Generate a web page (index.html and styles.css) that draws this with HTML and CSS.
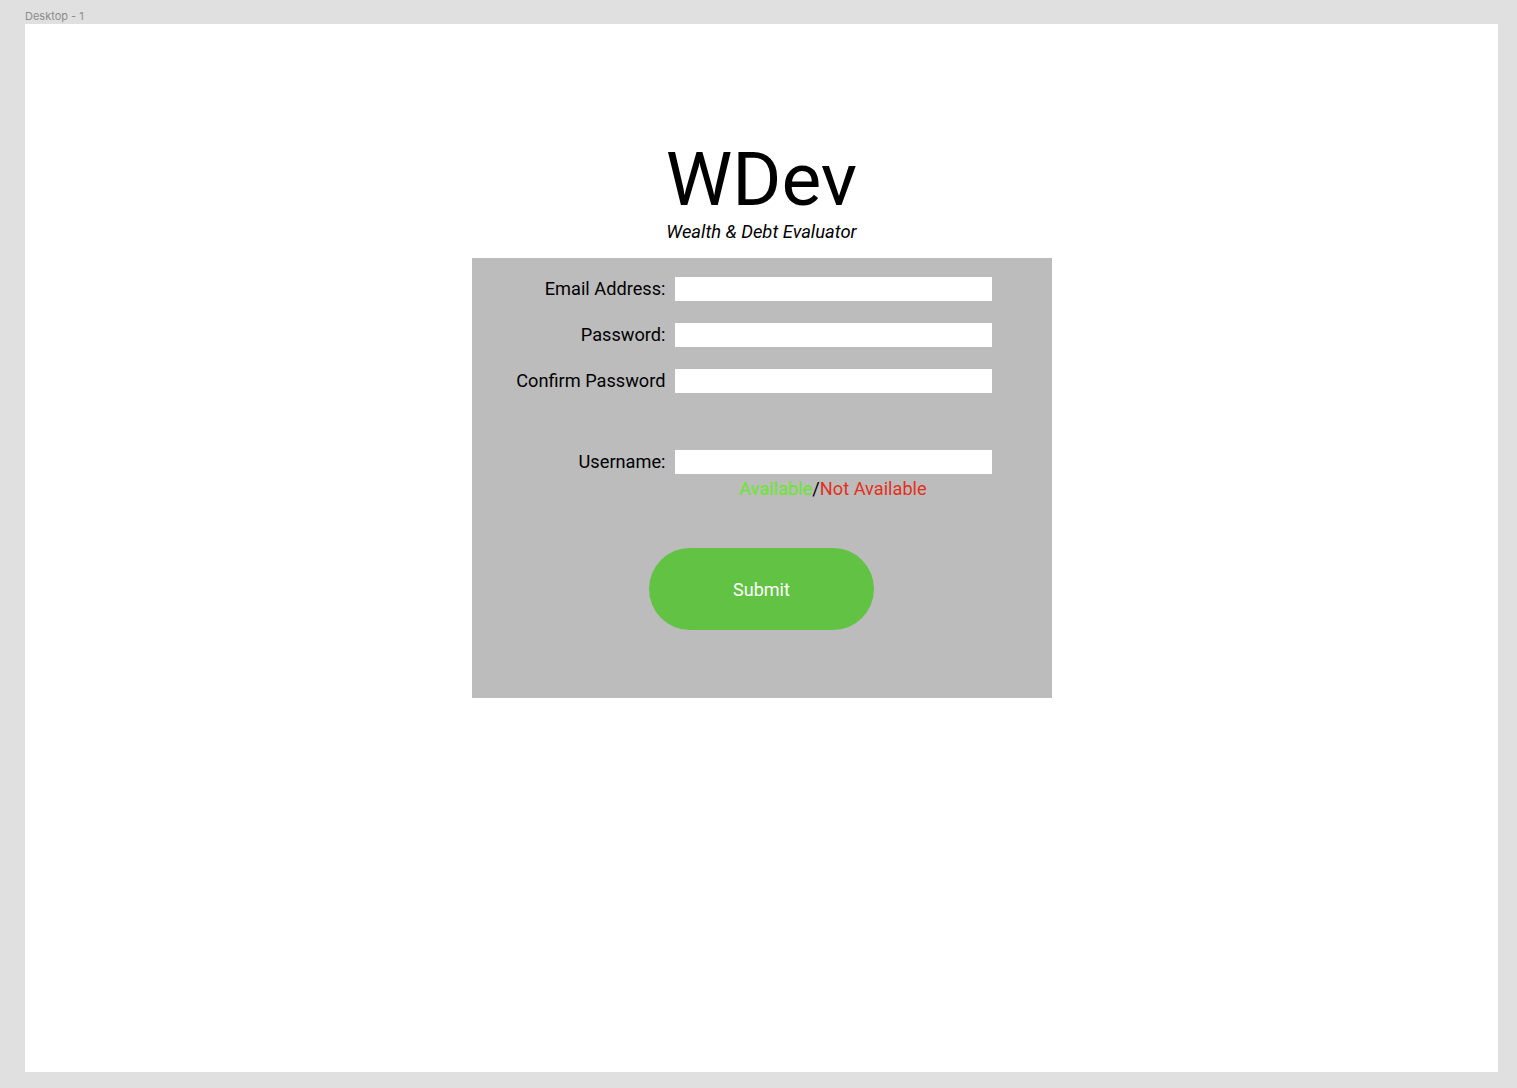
FILE: index.html
```html
<!DOCTYPE html>
<html lang="en">
<head>
<meta charset="utf-8">
<title>WDev</title>
<link rel="stylesheet" href="styles.css">
</head>
<body>
<div class="frame-label">Desktop - 1</div>
<main class="frame">
  <header class="brand">
    <h1 class="brand-title">WDev</h1>
    <p class="brand-sub">Wealth &amp; Debt Evaluator</p>
  </header>
  <form class="panel">
    <div class="row">
      <label class="label">Email Address:</label>
      <input class="field" type="text">
    </div>
    <div class="row">
      <label class="label">Password:</label>
      <input class="field" type="password">
    </div>
    <div class="row">
      <label class="label">Confirm Password</label>
      <input class="field" type="password">
    </div>
    <div class="row row-user">
      <label class="label">Username:</label>
      <input class="field" type="text">
    </div>
    <div class="avail-row">
      <span class="avail-spacer"></span>
      <p class="avail"><span class="ok">Available</span>/<span class="bad">Not Available</span></p>
    </div>
    <div class="actions">
      <button class="submit" type="button">Submit</button>
    </div>
  </form>
</main>
</body>
</html>
```

FILE: styles.css
```css
* { box-sizing: border-box; }

body {
  margin: 0;
  background: #e0e0e0;
  font-family: Roboto, "Liberation Sans", sans-serif;
  min-height: 1088px;
}

.frame-label {
  height: 24px;
  padding: 10px 0 0 25px;
  font-family: Inter, "Liberation Sans", sans-serif;
  font-size: 11px;
  line-height: 13px;
  color: #8c8c8c;
}

.frame {
  margin-left: 25px;
  width: 1473px;
  height: 1048px;
  background: #ffffff;
  display: flex;
  flex-direction: column;
  align-items: center;
  padding-top: 118px;
}

.brand {
  display: flex;
  flex-direction: column;
  align-items: center;
}

.brand-title {
  margin: 0;
  font-size: 75px;
  line-height: 75px;
  font-weight: 400;
  color: #000;
}

.brand-sub {
  margin: 0;
  margin-top: 4px;
  font-size: 18.4px;
  line-height: 21px;
  font-style: italic;
  color: #000;
}

.panel {
  margin-top: 16px;
  width: 580px;
  height: 440px;
  background: #bcbcbc;
  padding-top: 19px;
  display: flex;
  flex-direction: column;
}

.row {
  display: flex;
  align-items: center;
  height: 24px;
  margin-bottom: 22px;
}

.row-user {
  margin-top: 35px;
  margin-bottom: 0;
}

.label {
  width: 194px;
  padding-bottom: 2px;
  text-align: right;
  font-size: 18.2px;
  line-height: 21px;
  color: #000;
}

.field {
  margin-left: 9px;
  width: 317px;
  height: 24px;
  border: 0;
  background: #ffffff;
  padding: 0 4px;
}

.avail-row {
  display: flex;
  margin-top: 4px;
}

.avail-spacer {
  width: 203px;
}

.avail {
  margin: 0;
  width: 317px;
  text-align: center;
  font-size: 18.2px;
  line-height: 21px;
  color: #000;
}

.ok { color: #66e82a; }
.bad { color: #e3301d; }

.actions {
  display: flex;
  justify-content: center;
  margin-top: 49px;
}

.submit {
  width: 225px;
  height: 82px;
  border: 0;
  border-radius: 41px;
  background: #62c243;
  color: #ffffff;
  font-family: Roboto, "Liberation Sans", sans-serif;
  font-size: 18px;
  cursor: pointer;
}
```
